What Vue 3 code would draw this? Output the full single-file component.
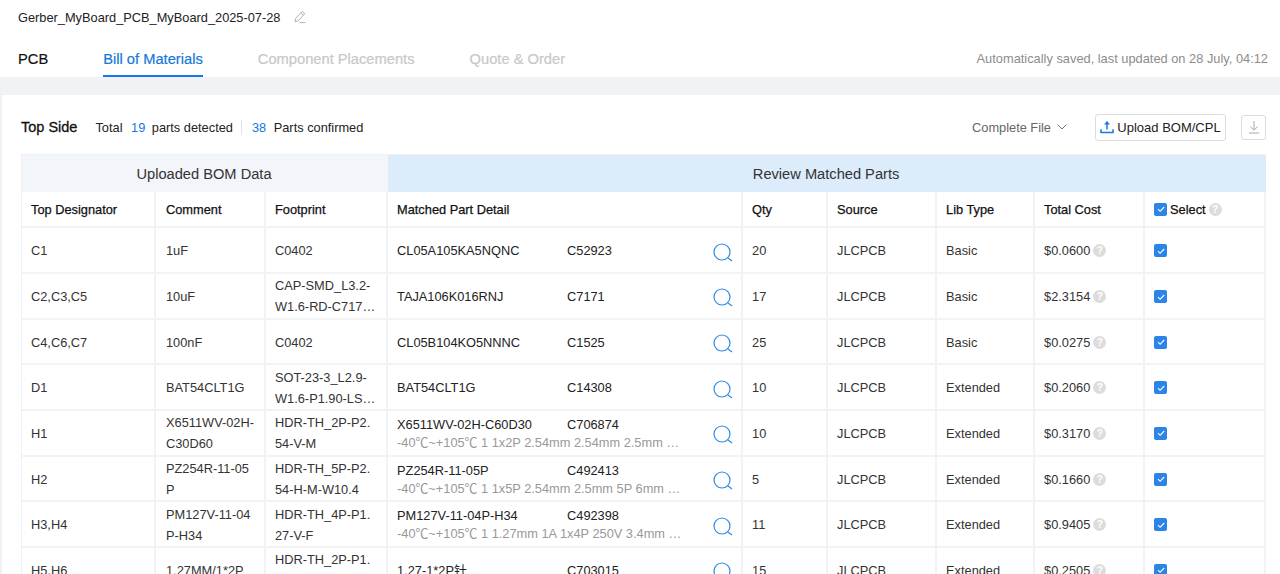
<script setup>
const rows = [
  { d: 'C1', c: ['1uF'], f: ['C0402'], p: 'CL05A105KA5NQNC', l: 'C52923', q: 20, t: 'Basic', cost: '$0.0600' },
  { d: 'C2,C3,C5', c: ['10uF'], f: ['CAP-SMD_L3.2-', 'W1.6-RD-C717…'], p: 'TAJA106K016RNJ', l: 'C7171', q: 17, t: 'Basic', cost: '$2.3154' },
  { d: 'C4,C6,C7', c: ['100nF'], f: ['C0402'], p: 'CL05B104KO5NNNC', l: 'C1525', q: 25, t: 'Basic', cost: '$0.0275' },
  { d: 'D1', c: ['BAT54CLT1G'], f: ['SOT-23-3_L2.9-', 'W1.6-P1.90-LS…'], p: 'BAT54CLT1G', l: 'C14308', q: 10, t: 'Extended', cost: '$0.2060' },
  { d: 'H1', c: ['X6511WV-02H-', 'C30D60'], f: ['HDR-TH_2P-P2.', '54-V-M'], p: 'X6511WV-02H-C60D30', l: 'C706874', s: '-40℃~+105℃ 1 1x2P 2.54mm 2.54mm 2.5mm …', q: 10, t: 'Extended', cost: '$0.3170' },
  { d: 'H2', c: ['PZ254R-11-05', 'P'], f: ['HDR-TH_5P-P2.', '54-H-M-W10.4'], p: 'PZ254R-11-05P', l: 'C492413', s: '-40℃~+105℃ 1 1x5P 2.54mm 2.5mm 5P 6mm …', q: 5, t: 'Extended', cost: '$0.1660' },
  { d: 'H3,H4', c: ['PM127V-11-04', 'P-H34'], f: ['HDR-TH_4P-P1.', '27-V-F'], p: 'PM127V-11-04P-H34', l: 'C492398', s: '-40℃~+105℃ 1 1.27mm 1A 1x4P 250V 3.4mm …', q: 11, t: 'Extended', cost: '$0.9405' },
  { d: 'H5,H6', c: ['1.27MM/1*2P'], f: ['HDR-TH_2P-P1.', '27-V-M'], p: '1.27-1*2P针', l: 'C703015', q: 15, t: 'Extended', cost: '$0.2505' },
]
</script>

<template>
  <div class="page">
    <header class="top">
      <div class="title">
        <span>Gerber_MyBoard_PCB_MyBoard_2025-07-28</span>
        <svg class="pencil" viewBox="0 0 14 14" width="14" height="14" fill="none" stroke="#b4b4b4" stroke-width="1">
          <path d="M9.2 1.4l2.6 2.2-6.6 7.2-3.2 1 .5-3.2z" />
          <path d="M7.8 3l2.6 2.2" />
          <path d="M6.5 12.6h6" />
        </svg>
      </div>
      <nav class="tabs">
        <span class="tab done">PCB</span>
        <span class="tab active">Bill of Materials</span>
        <span class="tab off">Component Placements</span>
        <span class="tab off">Quote &amp; Order</span>
        <span class="saved">Automatically saved, last updated on 28 July, 04:12</span>
      </nav>
    </header>

    <main class="band">
      <section class="card">
        <div class="toolbar">
          <strong class="side">Top Side</strong>
          <span class="stat">Total <b>19</b> parts detected</span>
          <span class="stat second"><b>38</b> Parts confirmed</span>
          <span class="spacer"></span>
          <span class="file">Complete File
            <svg viewBox="0 0 10 6" width="10" height="6" fill="none" stroke="#777" stroke-width="1"><path d="M.6.6L5 5l4.4-4.4" /></svg>
          </span>
          <button class="upload" type="button">
            <svg viewBox="0 0 14 14" width="14" height="14" fill="none" stroke="#1677e5" stroke-width="1.5">
              <path d="M7 9.5V2.2" />
              <path d="M7 1L10 4.6H4z" fill="#1677e5" stroke="none" />
              <path d="M1 9.2v3.3h12V9.2" />
            </svg>
            Upload BOM/CPL
          </button>
          <button class="download" type="button" aria-label="Download">
            <svg viewBox="0 0 12 14" width="12" height="14" fill="none" stroke="#aaa" stroke-width="1">
              <path d="M6 1v9M2.4 6.6L6 10.2l3.6-3.6M.8 13h10.4" />
            </svg>
          </button>
        </div>

        <table class="bom">
          <colgroup>
            <col class="c1" /><col class="c2" /><col class="c3" /><col class="c4" /><col class="c5" />
            <col class="c6" /><col class="c7" /><col class="c8" /><col class="c9" />
          </colgroup>
          <thead>
            <tr class="group">
              <th colspan="3" class="uploaded">Uploaded BOM Data</th>
              <th colspan="6" class="review">Review Matched Parts</th>
            </tr>
            <tr class="heads">
              <th>Top Designator</th><th>Comment</th><th>Footprint</th><th>Matched Part Detail</th>
              <th>Qty</th><th>Source</th><th>Lib Type</th><th>Total Cost</th>
              <th>
                <span class="sel">
                  <span class="check"><svg viewBox="0 0 12 12" width="12" height="12" fill="none" stroke="#fff" stroke-width="1.1"><path d="M3 6.2l2.1 2.1L9.2 4" /></svg></span>
                  Select
                  <span class="help">?</span>
                </span>
              </th>
            </tr>
          </thead>
          <tbody>
            <tr v-for="r in rows" :key="r.d">
              <td>{{ r.d }}</td>
              <td class="multi"><div v-for="x in r.c" :key="x">{{ x }}</div></td>
              <td class="multi"><div v-for="x in r.f" :key="x">{{ x }}</div></td>
              <td>
                <div class="part">
                  <div class="info">
                    <div class="names"><span class="mpn">{{ r.p }}</span><span>{{ r.l }}</span></div>
                    <div v-if="r.s" class="spec">{{ r.s }}</div>
                  </div>
                  <svg class="lens" viewBox="0 0 20 20" width="20" height="20" fill="none" stroke="#2d8ae6" stroke-width="1.2">
                    <circle cx="9" cy="9" r="8" />
                    <path d="M15 15l4 3" />
                  </svg>
                </div>
              </td>
              <td>{{ r.q }}</td>
              <td>JLCPCB</td>
              <td>{{ r.t }}</td>
              <td><span class="cost">{{ r.cost }}<span class="help">?</span></span></td>
              <td><span class="check row"><svg viewBox="0 0 12 12" width="12" height="12" fill="none" stroke="#fff" stroke-width="1.1"><path d="M3 6.2l2.1 2.1L9.2 4" /></svg></span></td>
            </tr>
          </tbody>
        </table>
      </section>
    </main>
  </div>
</template>

<style>
html, body { margin: 0; background: #fff; overflow: hidden; }
</style>

<style scoped>
.page {
  height: 574px;
  overflow: hidden;
  font-family: "Liberation Sans", Arial, "Noto Sans CJK SC", sans-serif;
  font-size: 12.8px;
  color: #222;
  display: flex;
  flex-direction: column;
}
.top { height: 77px; flex: none; padding: 0 12px 0 18px; box-sizing: border-box; }
.title { height: 36px; display: flex; align-items: center; gap: 13px; }
.title span { position: relative; top: -1px; }
.pencil { position: relative; top: -1px; }
.tabs { height: 41px; display: flex; align-items: flex-end; font-size: 14.7px; }
.tab { height: 41px; line-height: 46px; box-sizing: border-box; margin-right: 55px; white-space: nowrap; }
.tab.done { color: #111; -webkit-text-stroke: .2px #111; }
.tab.active { color: #1677d9; border-bottom: 2px solid #1677e5; -webkit-text-stroke: .2px #1677d9; }
.tab.off { color: #c8c8c8; -webkit-text-stroke: .2px #c8c8c8; }
.saved { margin-left: auto; color: #8c8c8c; font-size: 12.83px; height: 41px; line-height: 46px; }
.band { flex: 1; background: #f0f2f5; padding: 18px 0 0 2px; min-height: 0; }
.card { background: #fff; height: 100%; padding: 0 14px 0 19px; box-sizing: border-box; }
.toolbar { height: 59px; display: flex; align-items: center; padding-top: 5px; box-sizing: border-box; }
.side { font-size: 14.5px; font-weight: 400; -webkit-text-stroke: .3px #111; color: #111; margin-right: 18px; }
.stat b { font-weight: 400; color: #1677e5; margin: 0 3px 0 5px; }
.stat.second { border-left: 1px solid #e4e4e4; margin-left: 8px; padding-left: 5px; line-height: 15px; }
.stat.second b { margin-right: 4px; }
.spacer { flex: 1; }
.file { color: #666; display: flex; align-items: center; gap: 6px; margin-right: 28px; }
.upload {
  width: 131px; height: 27px; padding: 0; background: #fff; border: 1px solid #dcdcdc; border-radius: 3px;
  font: inherit; font-size: 13px; color: #222; display: flex; align-items: center; justify-content: center; gap: 3px; margin-right: 15px;
}
.download {
  width: 25px; height: 25px; padding: 0; background: #fff; border: 1px solid #dcdcdc; border-radius: 3px;
  display: flex; align-items: center; justify-content: center;
}
.bom {
  table-layout: fixed; border-collapse: separate; border-spacing: 0; width: 1245px; margin: 0;
  border-left: 1px solid #eef0f3; border-top: 1px solid #eef0f3;
}
.c1 { width: 134px; } .c2 { width: 110px; } .c3 { width: 122px; } .c4 { width: 355px; }
.c5 { width: 85px; } .c6 { width: 109px; } .c7 { width: 98px; } .c8 { width: 110px; } .c9 { width: 121px; }
th, td { border: 0 solid #f2f3f5; border-width: 0 2px 2px 0; padding: 0 9px; text-align: left; font-weight: 400; box-sizing: border-box; }
th:nth-child(2), td:nth-child(2) { padding-left: 10px; }
.group th { height: 37px; text-align: center; font-size: 14.65px; color: #333; border: 0; padding: 0 11px 0 9px; }
.uploaded { background: #f2f5fa; }
.review { background: #dcecfb; }
.heads th { height: 36.4px; color: #111; -webkit-text-stroke: .25px #111; }
tbody tr { height: 45.67px; }
td { line-height: 21px; color: #333; overflow: hidden; padding-top: 1px; }
.multi div { white-space: nowrap; overflow: hidden; }
.part { display: flex; align-items: center; justify-content: space-between; position: relative; top: 1px; }
.info { position: relative; top: -1px; min-width: 0; }
.names { display: flex; line-height: 15px; color: #222; }
.mpn { width: 170px; flex: none; }
.spec { color: #999; line-height: 15px; white-space: nowrap; margin-top: 3px; }
.lens { flex: none; margin: 2px -1px 0 0; }
.sel, .cost { display: inline-flex; align-items: center; gap: 3px; }
.sel { position: relative; top: 1px; }
.check {
  width: 13px; height: 13px; border-radius: 2px; background: #2b84e8; display: inline-flex;
  align-items: center; justify-content: center; -webkit-text-stroke: 0;
}
.check.row { vertical-align: middle; position: relative; top: -1px; }
.help {
  width: 13px; height: 13px; border-radius: 50%; background: #dcdcdc; color: #fff; font-size: 10px;
  line-height: 13px; text-align: center; -webkit-text-stroke: 0; font-weight: 700;
}
</style>
